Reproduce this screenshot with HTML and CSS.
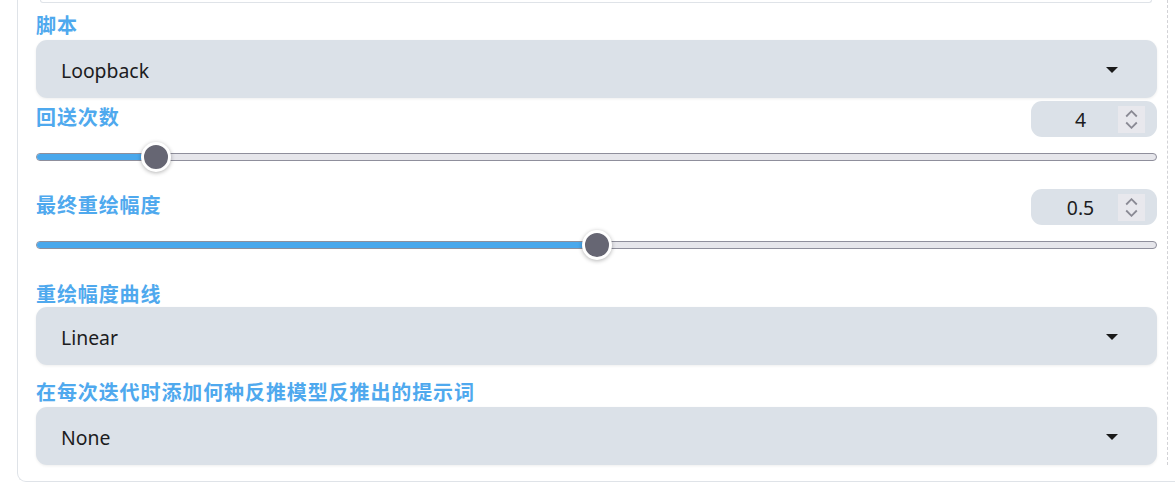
FILE: index.html
```html
<!DOCTYPE html>
<html lang="zh">
<head>
<meta charset="utf-8">
<link rel="stylesheet" href="styles.css">
</head>
<body>
<div class="panel">
  <div class="column">
    <div class="prev-box"></div>

    <div class="label first">脚本</div>
    <div class="dropdown"><span class="dd-value">Loopback</span><span class="caret"></span></div>

    <div class="slider-block b1">
      <div class="slider-head">
        <div class="label slabel">回送次数</div>
        <div class="number"><span class="num-value">4</span><span class="spinner"><svg width="13" height="19" viewBox="0 0 13 19"><path d="M1.2 6.5 L6.5 1.2 L11.8 6.5" fill="none" stroke="#8a8a94" stroke-width="1.8"/><path d="M1.2 12.5 L6.5 17.8 L11.8 12.5" fill="none" stroke="#8a8a94" stroke-width="1.8"/></svg></span></div>
      </div>
      <div class="slider">
        <div class="track"><div class="fill" style="width: 120px"></div></div>
        <div class="thumb" style="left: 105px"></div>
      </div>
    </div>

    <div class="slider-block b2">
      <div class="slider-head">
        <div class="label slabel">最终重绘幅度</div>
        <div class="number"><span class="num-value">0.5</span><span class="spinner"><svg width="13" height="19" viewBox="0 0 13 19"><path d="M1.2 6.5 L6.5 1.2 L11.8 6.5" fill="none" stroke="#8a8a94" stroke-width="1.8"/><path d="M1.2 12.5 L6.5 17.8 L11.8 12.5" fill="none" stroke="#8a8a94" stroke-width="1.8"/></svg></span></div>
      </div>
      <div class="slider">
        <div class="track"><div class="fill" style="width: 561px"></div></div>
        <div class="thumb" style="left: 546px"></div>
      </div>
    </div>

    <div class="label l3">重绘幅度曲线</div>
    <div class="dropdown d3"><span class="dd-value">Linear</span><span class="caret"></span></div>

    <div class="label l4">在每次迭代时添加何种反推模型反推出的提示词</div>
    <div class="dropdown d4"><span class="dd-value">None</span><span class="caret"></span></div>
  </div>
</div>
</body>
</html>
```

FILE: styles.css
```css
html, body {
  margin: 0;
  padding: 0;
  background: #ffffff;
  overflow: hidden;
}

body {
  width: 1175px;
  height: 493px;
  font-family: "Noto Sans", "Noto Sans CJK SC", sans-serif;
  color: #1c1c21;
}

.panel {
  margin-left: 17px;
  width: 1200px;
  border-left: 1px solid #dfe3e8;
  border-bottom: 1px solid #dfe3e8;
  border-bottom-left-radius: 9px;
  padding: 0 0 16px 18px;
  box-sizing: border-box;
}

.column {
  width: 1121px;
  padding-right: 10px;
  border-right: 1px dashed #d2d2d6;
  display: flex;
  flex-direction: column;
}

.prev-box {
  margin: 0 5px 0 4px;
  height: 2px;
  border: 1px solid #dfe3e8;
  border-top: none;
  border-radius: 0 0 9px 9px;
}

.label {
  font-family: "Noto Sans CJK SC", "Noto Sans", sans-serif;
  font-weight: 700;
  font-size: 20px;
  line-height: 26px;
  color: #4fa9ee;
  letter-spacing: 0.9px;
}

.label.first { margin-top: 9px; }

.dropdown {
  margin-top: 2px;
  height: 58px;
  background: #dbe1e8;
  border-radius: 11px;
  box-shadow: 0 1px 3px rgba(0, 0, 0, 0.07);
  display: flex;
  align-items: center;
  padding: 2px 39px 0 25px;
  box-sizing: border-box;
}

.dd-value {
  flex: 1;
  font-size: 19.4px;
  color: #1c1c21;
}

.caret {
  width: 0;
  height: 0;
  border-left: 6px solid transparent;
  border-right: 6px solid transparent;
  border-top: 6px solid #1a1a1a;
}

.slider-block.b1 { margin-top: 3px; }
.slider-block.b2 { margin-top: 12px; }

.slider-head {
  display: flex;
  justify-content: space-between;
  align-items: flex-start;
}

.slabel { padding-top: 3px; }

.number {
  width: 126px;
  height: 36px;
  box-sizing: border-box;
  background: #dbe1e8;
  border-radius: 11px;
  display: flex;
  align-items: center;
  padding: 0 12px;
}

.num-value {
  flex: 1;
  text-align: center;
  font-size: 19.4px;
  color: #1c1c21;
}

.spinner {
  width: 27px;
  height: 27px;
  background: #e8e8ed;
  display: flex;
  align-items: center;
  justify-content: center;
}

.slider {
  position: relative;
  height: 40px;
  display: flex;
  align-items: center;
}

.track {
  position: relative;
  width: 100%;
  height: 8px;
  box-sizing: border-box;
  background: #e6e6eb;
  border: 1px solid #8f8f9c;
  border-radius: 5px;
  overflow: hidden;
}

.fill {
  position: absolute;
  left: -1px;
  top: -1px;
  bottom: -1px;
  background: #4aa8ec;
  border-bottom: 1px solid #3a8fd2;
  box-sizing: border-box;
}

.thumb {
  position: absolute;
  top: 5px;
  width: 24px;
  height: 24px;
  border-radius: 50%;
  background: #666673;
  border: 3px solid #ffffff;
  box-shadow: 0 1px 4px rgba(0, 0, 0, 0.3);
}

.label.l3 { margin-top: 16px; }
.dropdown.d3 { margin-top: 0; }
.label.l4 { margin-top: 14px; }
.dropdown.d4 { margin-top: 2px; }
```
